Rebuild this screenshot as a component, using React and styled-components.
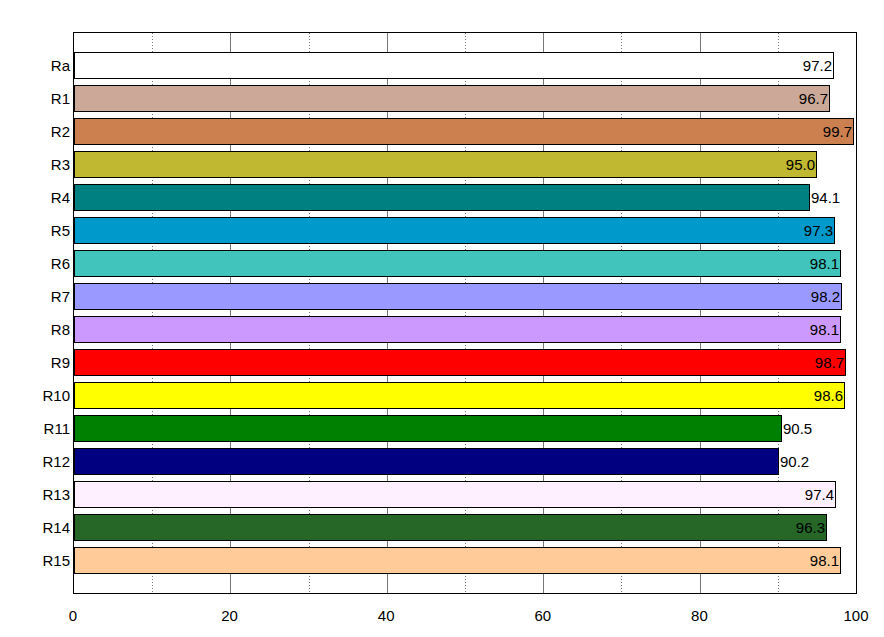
import React from "react";
import styled, { createGlobalStyle } from "styled-components";

const G = createGlobalStyle`
  body{margin:0;background:#fff;font-family:"Liberation Sans",Arial,sans-serif;}
`;
const data = [
  ["Ra", 97.2, "#ffffff"], ["R1", 96.7, "#cca898"], ["R2", 99.7, "#cc8050"],
  ["R3", 95.0, "#c0b830"], ["R4", 94.1, "#008080", 1], ["R5", 97.3, "#0099cc"],
  ["R6", 98.1, "#40c4bc"], ["R7", 98.2, "#9999ff"], ["R8", 98.1, "#cc99ff"],
  ["R9", 98.7, "#ff0000"], ["R10", 98.6, "#ffff00"], ["R11", 90.5, "#008000", 1],
  ["R12", 90.2, "#000080", 1], ["R13", 97.4, "#fff0ff"], ["R14", 96.3, "#266626"],
  ["R15", 98.1, "#ffcc99"],
];
const S = 7.82;
const Wrap = styled.div`width:884px;height:637px;padding:32px 0 0 0;box-sizing:border-box;`;
const Chart = styled.div`display:flex;`;
const Labels = styled.div`width:70px;padding-top:20px;display:flex;flex-direction:column;`;
const Lab = styled.div`height:33px;line-height:27px;text-align:right;font-size:15px;color:#000;`;
const Plot = styled.div`position:relative;margin-left:3px;width:782px;height:560px;border:1px solid #000;box-sizing:content-box;`;
const Rows = styled.div`position:relative;padding-top:19px;display:flex;flex-direction:column;`;
const Row = styled.div`height:33px;display:flex;align-items:flex-start;`;
const Bar = styled.div`height:25px;border:1px solid #000;background:${p=>p.c};position:relative;box-sizing:content-box;`;
const Val = styled.span`position:absolute;top:4px;font-size:15px;color:#000;
  ${p=>p.out?"left:100%;margin-left:2px;":"right:1px;"}`;
const Axis = styled.div`position:relative;margin-left:73px;height:40px;`;
const Tick = styled.span`position:absolute;top:13px;transform:translateX(-50%);font-size:15px;`;

export default function App(){
  return <Wrap><G/>
    <Chart>
      <Labels>{data.map(d=><Lab key={d[0]}>{d[0]}</Lab>)}</Labels>
      <Plot>
        <svg width="782" height="560" style={{position:"absolute",left:0,top:0}}>
          {[1,2,3,4,5,6,7,8,9].map(i=>{const x=Math.round(i*78.2)+0.5;return <line key={i} x1={x} x2={x} y1="0" y2="560" stroke={i%2?"#777":"#777"} strokeDasharray={i%2?"1 2":undefined} strokeWidth="1"/>;})}
        </svg>
        <Rows>{data.map(d=><Row key={d[0]}><Bar c={d[2]} style={{width:Math.round(d[1]*S)-2+"px"}}><Val out={d[3]}>{d[1].toFixed(1)}</Val></Bar></Row>)}</Rows>
      </Plot>
    </Chart>
    <Axis>{[0,20,40,60,80,100].map(v=><Tick key={v} style={{left:v*7.83+"px"}}>{v}</Tick>)}</Axis>
  </Wrap>;
}
